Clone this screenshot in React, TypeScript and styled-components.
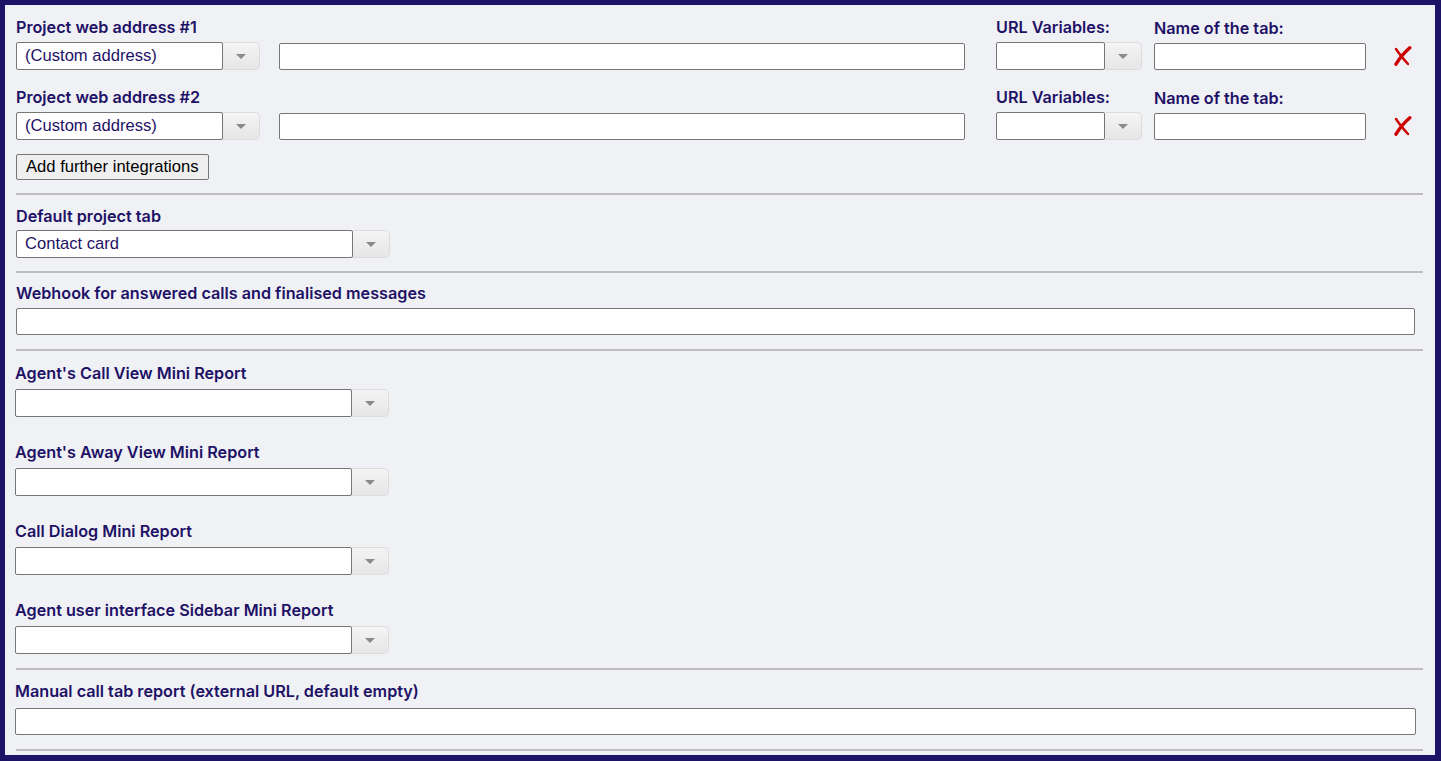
import React from "react";
import styled, { createGlobalStyle } from "styled-components";

const ink = "#1e1266";

const GlobalStyle = createGlobalStyle`
  html, body {
    margin: 0;
    padding: 0;
    background: ${ink};
  }
  * {
    box-sizing: border-box;
  }
`;

const Frame = styled.div`
  width: 1441px;
  height: 761px;
  border-style: solid;
  border-color: ${ink};
  border-width: 5px 6px 6px 5px;
  background: #f0f1f5;
  padding: 0 12px 0 11px;
  overflow: hidden;
  font-family: "Liberation Sans", Arial, sans-serif;
`;

const Section = styled.div<{ $pt?: number; $pb?: number }>`
  padding-top: ${(p) => p.$pt ?? 12}px;
  padding-bottom: ${(p) => p.$pb ?? 13}px;
  border-bottom: 2px solid #bdbdbd;
`;

const Row = styled.div<{ $mt?: number }>`
  display: flex;
  align-items: flex-end;
  margin-top: ${(p) => p.$mt ?? 0}px;
`;

const Field = styled.div<{ $ml?: number; $mt?: number }>`
  display: flex;
  flex-direction: column;
  margin-left: ${(p) => p.$ml ?? 0}px;
  margin-top: ${(p) => p.$mt ?? 0}px;
`;

const Label = styled.label<{ $gap?: number }>`
  display: block;
  font-family: Inter, Roboto, "Noto Sans", sans-serif;
  font-weight: 600;
  font-size: 16.2px;
  line-height: 20px;
  height: 20px;
  color: ${ink};
  margin-bottom: ${(p) => p.$gap ?? 5}px;
  white-space: nowrap;
`;

const TextInput = styled.div<{ $w: number; $h?: number }>`
  width: ${(p) => p.$w}px;
  height: ${(p) => p.$h ?? 27}px;
  background: #fff;
  border: 1px solid #767676;
  border-radius: 2px;
`;

const SelectBox = styled.div<{ $w: number }>`
  display: flex;
  width: ${(p) => p.$w}px;
  height: 28px;
`;

const SelectValue = styled.div`
  flex: 1;
  background: #fff;
  border: 1px solid #767676;
  border-radius: 2px;
  padding-left: 8px;
  font-size: 16.6px;
  line-height: 26px;
  color: ${ink};
  white-space: nowrap;
  overflow: hidden;
  position: relative;
  z-index: 1;
`;

const SelectArrow = styled.div`
  width: 38px;
  margin-left: -1px;
  display: flex;
  align-items: center;
  justify-content: center;
  background: linear-gradient(#f4f4f4, #e6e6e6);
  border: 1px solid #dcdcdc;
  border-left: none;
  border-radius: 0 5px 5px 0;
  &::after {
    content: "";
    border-left: 5px solid transparent;
    border-right: 5px solid transparent;
    border-top: 5px solid #8a8a8a;
  }
`;

const Button = styled.button`
  margin-top: 14px;
  height: 26px;
  padding: 0 9px;
  font-family: "Liberation Sans", Arial, sans-serif;
  font-size: 16.6px;
  color: #000;
  background: #efefef;
  border: 1px solid #767676;
  border-radius: 2px;
`;

const Remove = styled.div`
  margin-left: 26px;
  width: 20px;
  height: 28px;
  display: flex;
  align-items: center;
  justify-content: center;
`;

function Select({ width, value }: { width: number; value?: string }) {
  return (
    <SelectBox $w={width}>
      <SelectValue>{value}</SelectValue>
      <SelectArrow />
    </SelectBox>
  );
}

// hand-drawn style "✗" used to drop an address row
function RemoveIcon() {
  return (
    <Remove>
      <svg width="19" height="20" viewBox="0 0 19 20">
        <path
          d="M3 3 C6 7.5, 10 12.5, 15 18"
          stroke="#cc0000"
          strokeWidth="2.4"
          strokeLinecap="round"
          fill="none"
        />
        <path
          d="M16.8 1.8 C12 6, 7 11.5, 3 18.2"
          stroke="#cc0000"
          strokeWidth="3.4"
          strokeLinecap="round"
          fill="none"
        />
      </svg>
    </Remove>
  );
}

function AddressRow({ n, first }: { n: number; first?: boolean }) {
  return (
    <Row $mt={first ? 0 : 17}>
      <Field>
        <Label>Project web address #{n}</Label>
        <Select width={244} value="(Custom address)" />
      </Field>
      <Field $ml={19}>
        <TextInput $w={686} />
      </Field>
      <Field $ml={31}>
        <Label>URL Variables:</Label>
        <Select width={146} />
      </Field>
      <Field $ml={12}>
        <Label>Name of the tab:</Label>
        <TextInput $w={212} />
      </Field>
      <RemoveIcon />
    </Row>
  );
}

const reports = [
  "Agent's Call View Mini Report",
  "Agent's Away View Mini Report",
  "Call Dialog Mini Report",
  "Agent user interface Sidebar Mini Report",
];

const Shifted = styled.div`
  margin-left: -1px;
`;

export default function App() {
  return (
    <>
      <GlobalStyle />
      <Frame>
        <Section $pb={13}>
          <AddressRow n={1} first />
          <AddressRow n={2} />
          <Button>Add further integrations</Button>
        </Section>
        <Section $pt={11} $pb={13}>
          <Field>
            <Label $gap={4}>Default project tab</Label>
            <Select width={374} value="Contact card" />
          </Field>
        </Section>
        <Section $pt={10} $pb={14}>
          <Field>
            <Label>Webhook for answered calls and finalised messages</Label>
            <TextInput $w={1399} $h={27} />
          </Field>
        </Section>
        <Section $pt={12} $pb={14}>
          <Shifted>
            {reports.map((r, i) => (
              <Field key={r} $mt={i === 0 ? 0 : 25}>
                <Label $gap={6}>{r}</Label>
                <Select width={374} />
              </Field>
            ))}
          </Shifted>
        </Section>
        <Section $pt={11} $pb={14}>
          <Shifted>
            <Field>
              <Label $gap={7}>Manual call tab report (external URL, default empty)</Label>
              <TextInput $w={1401} $h={27} />
            </Field>
          </Shifted>
        </Section>
      </Frame>
    </>
  );
}
